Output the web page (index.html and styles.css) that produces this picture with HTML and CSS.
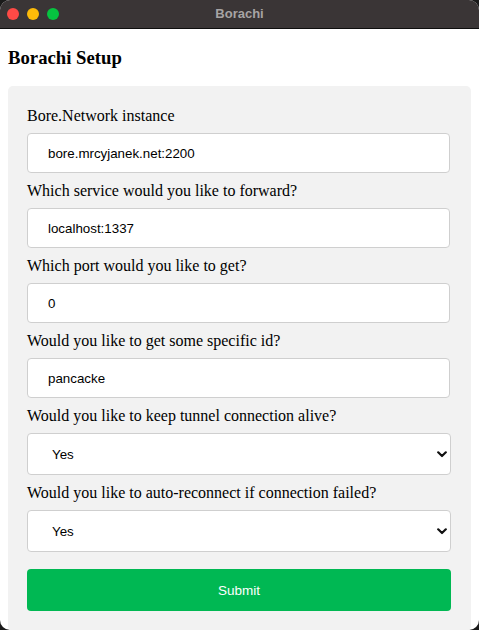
FILE: index.html
```html
<!DOCTYPE html>
<html>
<head>
<meta charset="utf-8">
<link rel="stylesheet" href="styles.css">
</head>
<body>
<div class="window">
  <div class="titlebar">
    <div class="lights">
      <span class="light red"></span>
      <span class="light yellow"></span>
      <span class="light green"></span>
    </div>
    <div class="title">Borachi</div>
  </div>
  <div class="content">
    <h3 class="heading">Borachi Setup</h3>
    <form class="card">
      <label class="label">Bore.Network instance</label>
      <input class="field" type="text" value="bore.mrcyjanek.net:2200">
      <label class="label">Which service would you like to forward?</label>
      <input class="field" type="text" value="localhost:1337">
      <label class="label">Which port would you like to get?</label>
      <input class="field" type="text" value="0">
      <label class="label">Would you like to get some specific id?</label>
      <input class="field" type="text" value="pancacke">
      <label class="label">Would you like to keep tunnel connection alive?</label>
      <div class="select-wrap">
        <select class="field select"><option>Yes</option><option>No</option></select>
        <svg class="chev" width="10" height="7" viewBox="0 0 10 7"><path d="M1.2 1.3 L5 5 L8.8 1.3" fill="none" stroke="#111" stroke-width="2.2" stroke-linecap="round" stroke-linejoin="round"/></svg>
      </div>
      <label class="label">Would you like to auto-reconnect if connection failed?</label>
      <div class="select-wrap">
        <select class="field select"><option>Yes</option><option>No</option></select>
        <svg class="chev" width="10" height="7" viewBox="0 0 10 7"><path d="M1.2 1.3 L5 5 L8.8 1.3" fill="none" stroke="#111" stroke-width="2.2" stroke-linecap="round" stroke-linejoin="round"/></svg>
      </div>
      <button class="submit" type="button">Submit</button>
    </form>
  </div>
</div>
</body>
</html>
```
FILE: styles.css
```css
html, body {
  margin: 0;
  padding: 0;
  background: #1a1a1a;
  overflow: hidden;
}
.window {
  width: 479px;
  height: 630px;
  background: #fff;
  border-radius: 10px;
  overflow: hidden;
  display: flex;
  flex-direction: column;
}
.titlebar {
  height: 28px;
  flex: none;
  background: #3a3536;
  border-bottom: 1px solid #0e0e0e;
  position: relative;
  display: flex;
  align-items: center;
  justify-content: center;
}
.lights {
  position: absolute;
  left: 7px;
  top: 8px;
  display: flex;
  gap: 8px;
}
.light {
  width: 12px;
  height: 12px;
  border-radius: 50%;
  display: block;
}
.red { background: #fe4a46; }
.yellow { background: #fdbb09; }
.green { background: #06c440; }
.title {
  font-family: "Liberation Sans", Arial, sans-serif;
  font-weight: bold;
  font-size: 13px;
  color: #a7a4a4;
  margin-top: -2px;
}
.content {
  flex: 1;
  padding: 0 8px;
  display: flex;
  flex-direction: column;
}
.heading {
  font-family: "Liberation Serif", "Times New Roman", serif;
  font-size: 18.72px;
  font-weight: bold;
  line-height: 22px;
  margin: 18px 0 17px;
}
.card {
  flex: 1;
  background: #f2f2f2;
  border-radius: 5px;
  padding: 20px;
  display: flex;
  flex-direction: column;
  margin: 0;
}
.label {
  font-family: "Liberation Serif", "Times New Roman", serif;
  font-size: 16px;
  line-height: 19px;
  color: #000;
  display: block;
  margin-left: -1px;
}
.field {
  box-sizing: border-box;
  width: 100%;
  height: 40px;
  margin: 8px 0;
  padding: 0 20px;
  border: 1px solid #cfcfcf;
  border-radius: 4px;
  background: #fff;
  font-family: "Liberation Sans", Arial, sans-serif;
  font-size: 13.33px;
  color: #000;
  outline: none;
  margin-left: -1px;
}
.select-wrap {
  position: relative;
  margin: 8px 0;
}
.select {
  height: 42px;
  margin: 0 0 0 -1px;
  padding: 0 24px;
  -webkit-appearance: none;
  appearance: none;
  width: calc(100% + 1px);
}
.chev {
  position: absolute;
  right: 4px;
  top: 18px;
}
.submit {
  box-sizing: border-box;
  width: calc(100% + 1px);
  height: 42px;
  margin: 9px 0 0 -1px;
  border: none;
  border-radius: 4px;
  background: #00b853;
  color: #fff;
  font-family: "Liberation Sans", Arial, sans-serif;
  font-size: 13.5px;
  flex: none;
}
```
